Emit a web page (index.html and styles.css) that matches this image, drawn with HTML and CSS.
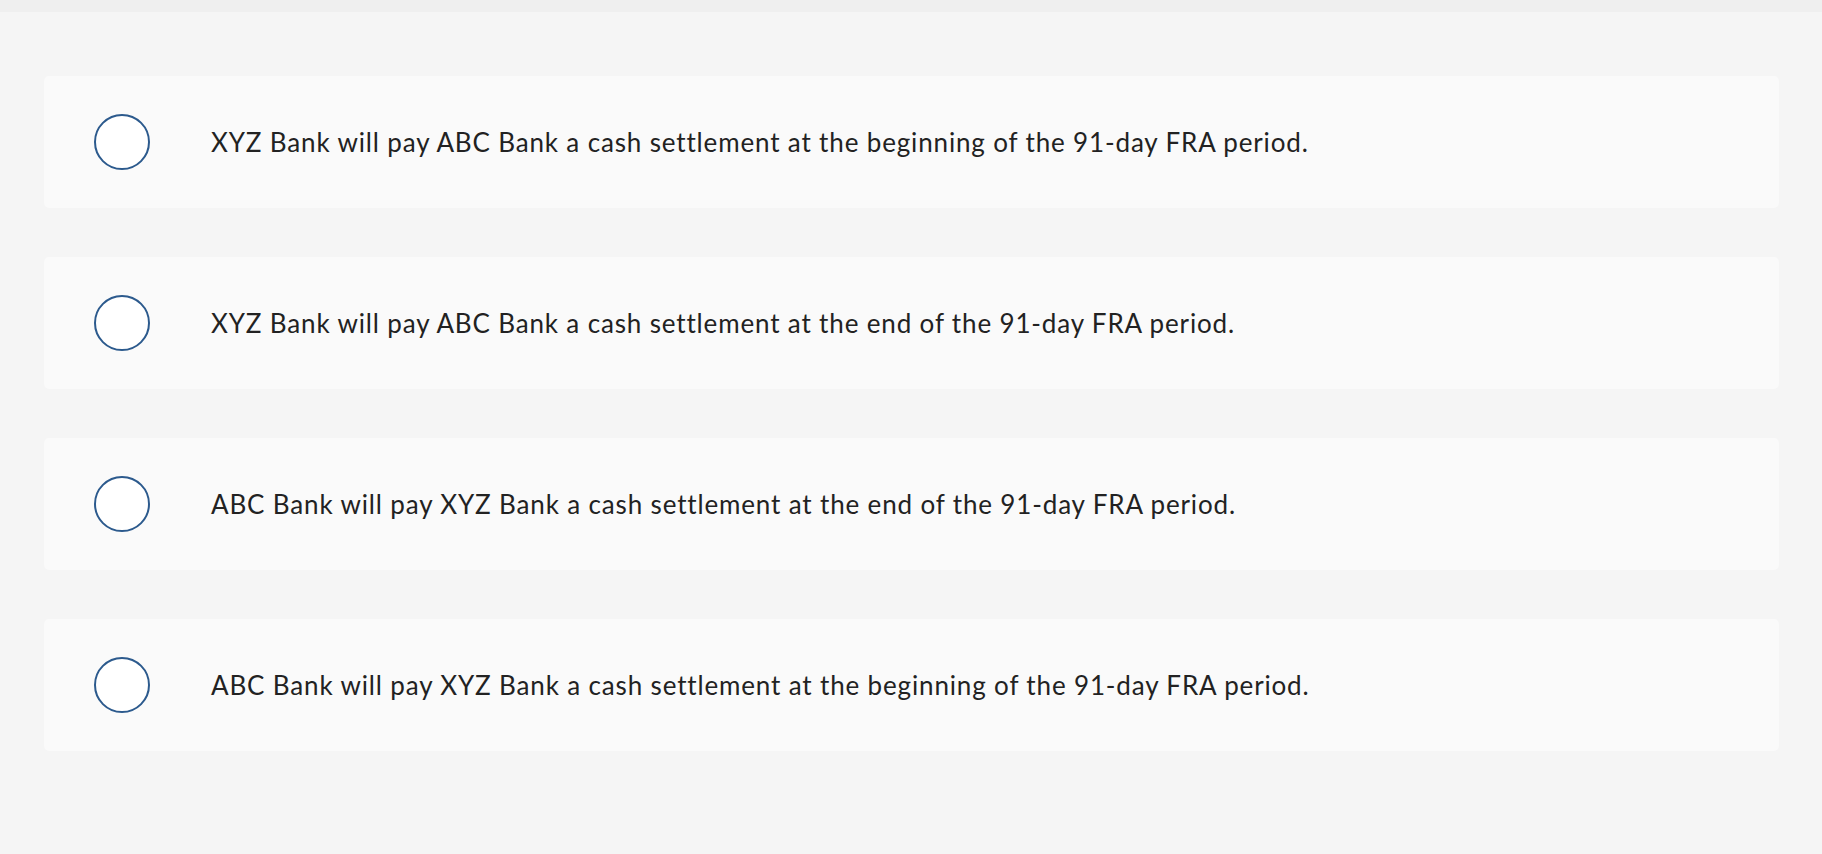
FILE: index.html
```html
<!DOCTYPE html>
<html lang="en">
<head>
<meta charset="utf-8">
<title>Choices</title>
<link rel="stylesheet" href="styles.css">
</head>
<body>
<div class="topbar"></div>
<main class="choices">
  <label class="choice">
    <span class="radio"></span>
    <span class="text">XYZ Bank will pay ABC Bank a cash settlement at the beginning of the 91-day FRA period.</span>
  </label>
  <label class="choice">
    <span class="radio"></span>
    <span class="text">XYZ Bank will pay ABC Bank a cash settlement at the end of the 91-day FRA period.</span>
  </label>
  <label class="choice">
    <span class="radio"></span>
    <span class="text">ABC Bank will pay XYZ Bank a cash settlement at the end of the 91-day FRA period.</span>
  </label>
  <label class="choice">
    <span class="radio"></span>
    <span class="text">ABC Bank will pay XYZ Bank a cash settlement at the beginning of the 91-day FRA period.</span>
  </label>
</main>
</body>
</html>
```
FILE: styles.css
```css
html, body {
  margin: 0;
  padding: 0;
  background: #f5f5f5;
  height: 100%;
}
body {
  font-family: "Lato", "Liberation Sans", sans-serif;
  color: #222222;
}
.topbar {
  height: 12px;
  background: #efefef;
}
.choices {
  display: flex;
  flex-direction: column;
  gap: 49px;
  padding: 64px 43px 0 44px;
}
.choice {
  display: flex;
  align-items: center;
  height: 132px;
  box-sizing: border-box;
  padding-left: 50px;
  background: #fafafa;
  border-radius: 5px;
}
.radio {
  flex: none;
  width: 56px;
  height: 56px;
  box-sizing: border-box;
  border: 2.5px solid #2c5a8d;
  border-radius: 50%;
  background: #ffffff;
}
.text {
  margin-left: 61px;
  font-size: 26px;
  line-height: 30px;
  letter-spacing: 0.85px;
}
```
